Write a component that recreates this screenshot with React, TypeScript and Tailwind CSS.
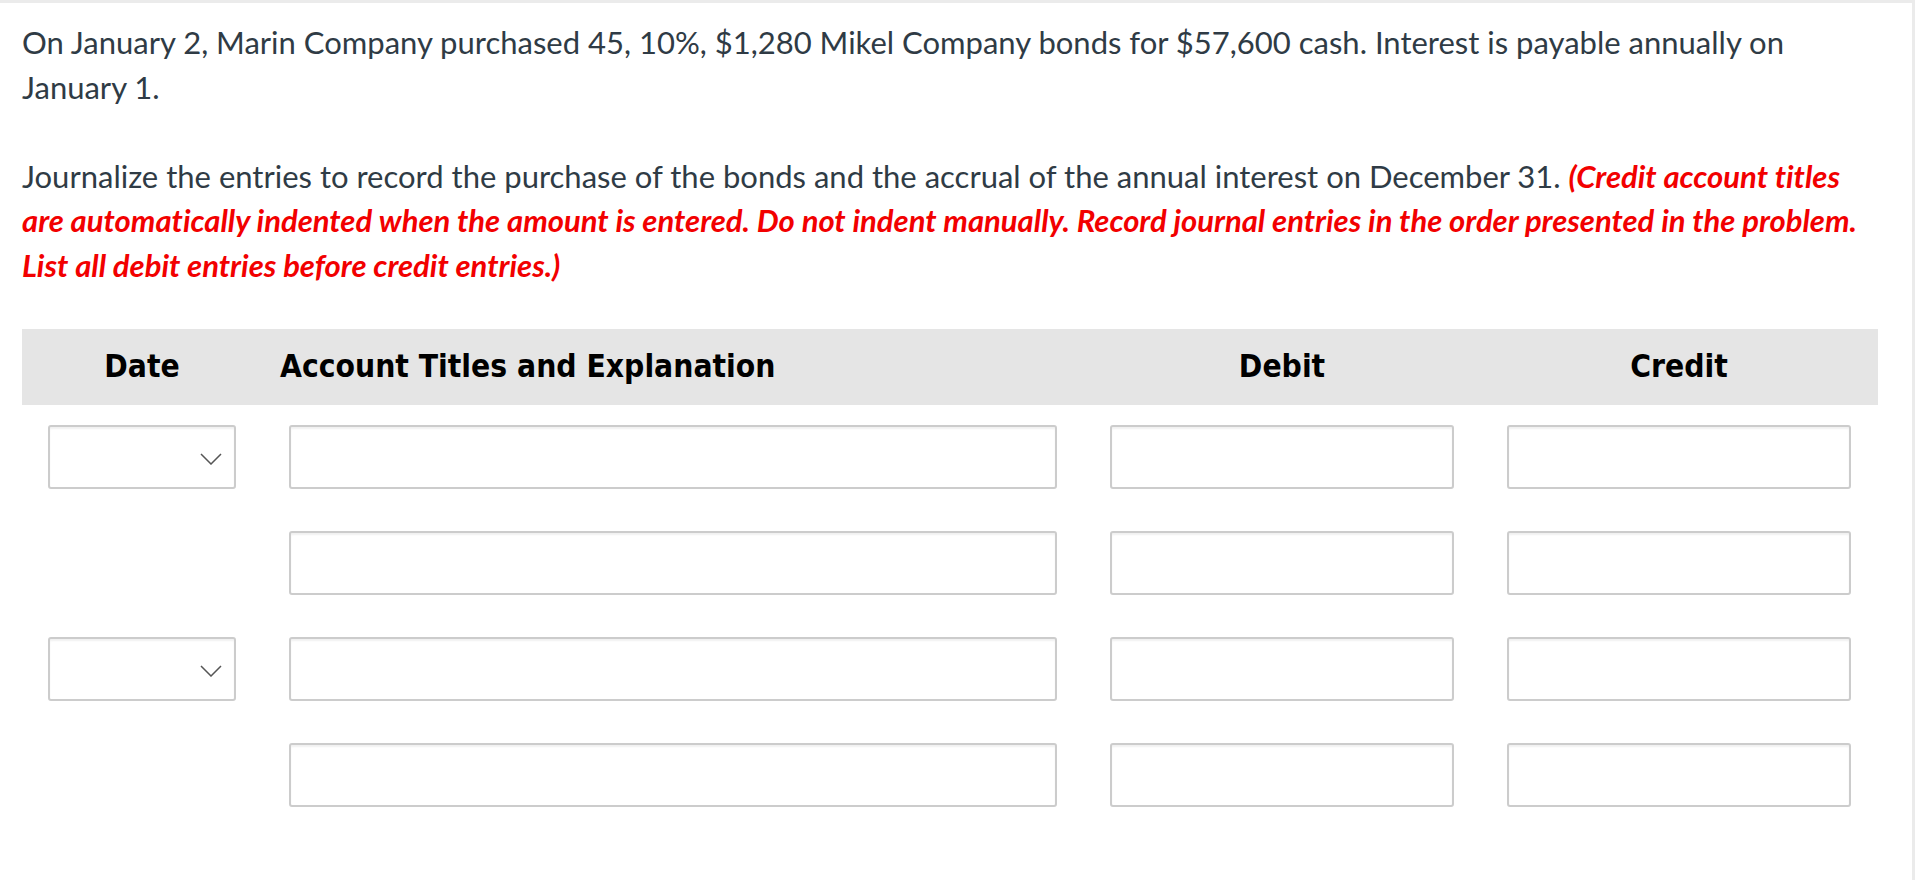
import React from 'react';

const body = { fontFamily: 'Lato, "Open Sans", sans-serif' };
const head = { fontFamily: '"DejaVu Sans Condensed", "DejaVu Sans", sans-serif' };

function Box({ select = false }: { select?: boolean }) {
  return (
    <div className="relative h-[64px] rounded-[3px] border-2 border-[#cccccc] bg-white shadow-[inset_0_2px_2px_rgba(0,0,0,0.06)]">
      {select && (
        <svg
          className="absolute right-[12px] top-[26px]"
          width="22"
          height="12"
          viewBox="0 0 22 12"
          fill="none"
        >
          <polyline points="1,1 11,11 21,1" stroke="#555555" strokeWidth="1.5" />
        </svg>
      )}
    </div>
  );
}

function Row({ date }: { date: boolean }) {
  return (
    <div className="grid grid-cols-[188px_768px_344px_344px] gap-x-[53px] px-[26px]">
      {date ? <Box select /> : <div />}
      <Box />
      <Box />
      <Box />
    </div>
  );
}

export default function App() {
  return (
    <div className="min-h-screen bg-white border-t-[3px] border-r-[3px] border-[#ebebeb]">
      <div className="pl-[22px] pr-[34px] pt-[17px]">
        <div
          className="-mr-[10px] text-[31px] leading-[44.6px] text-[#2f3b45] [font-variant-ligatures:none]"
          style={body}
        >
          <p>
            On January 2, Marin Company purchased 45, 10%, $1,280 Mikel Company bonds for $57,600 cash. Interest is
            payable annually on January 1.
          </p>
          <p className="mt-[44.6px]">
            Journalize the entries to record the purchase of the bonds and the accrual of the annual interest on December
            31.{' '}
            <span className="font-bold italic text-[#f20000]">
              (Credit account titles are automatically indented when the amount is entered. Do not indent manually.
              Record journal entries in the order presented in the problem. List all debit entries before credit
              entries.)
            </span>
          </p>
        </div>

        <div className="mt-[41px]">
          <div
            className="grid h-[76px] grid-cols-[188px_768px_344px_344px] items-center gap-x-[53px] bg-[#e5e5e5] px-[26px] text-[31.5px] font-bold text-black"
            style={head}
          >
            <div className="text-center">Date</div>
            <div className="-ml-[9px]">Account Titles and Explanation</div>
            <div className="text-center">Debit</div>
            <div className="text-center">Credit</div>
          </div>

          <div className="mt-[20px] flex flex-col gap-y-[42px]">
            <Row date />
            <Row date={false} />
            <Row date />
            <Row date={false} />
          </div>
        </div>
      </div>
    </div>
  );
}
